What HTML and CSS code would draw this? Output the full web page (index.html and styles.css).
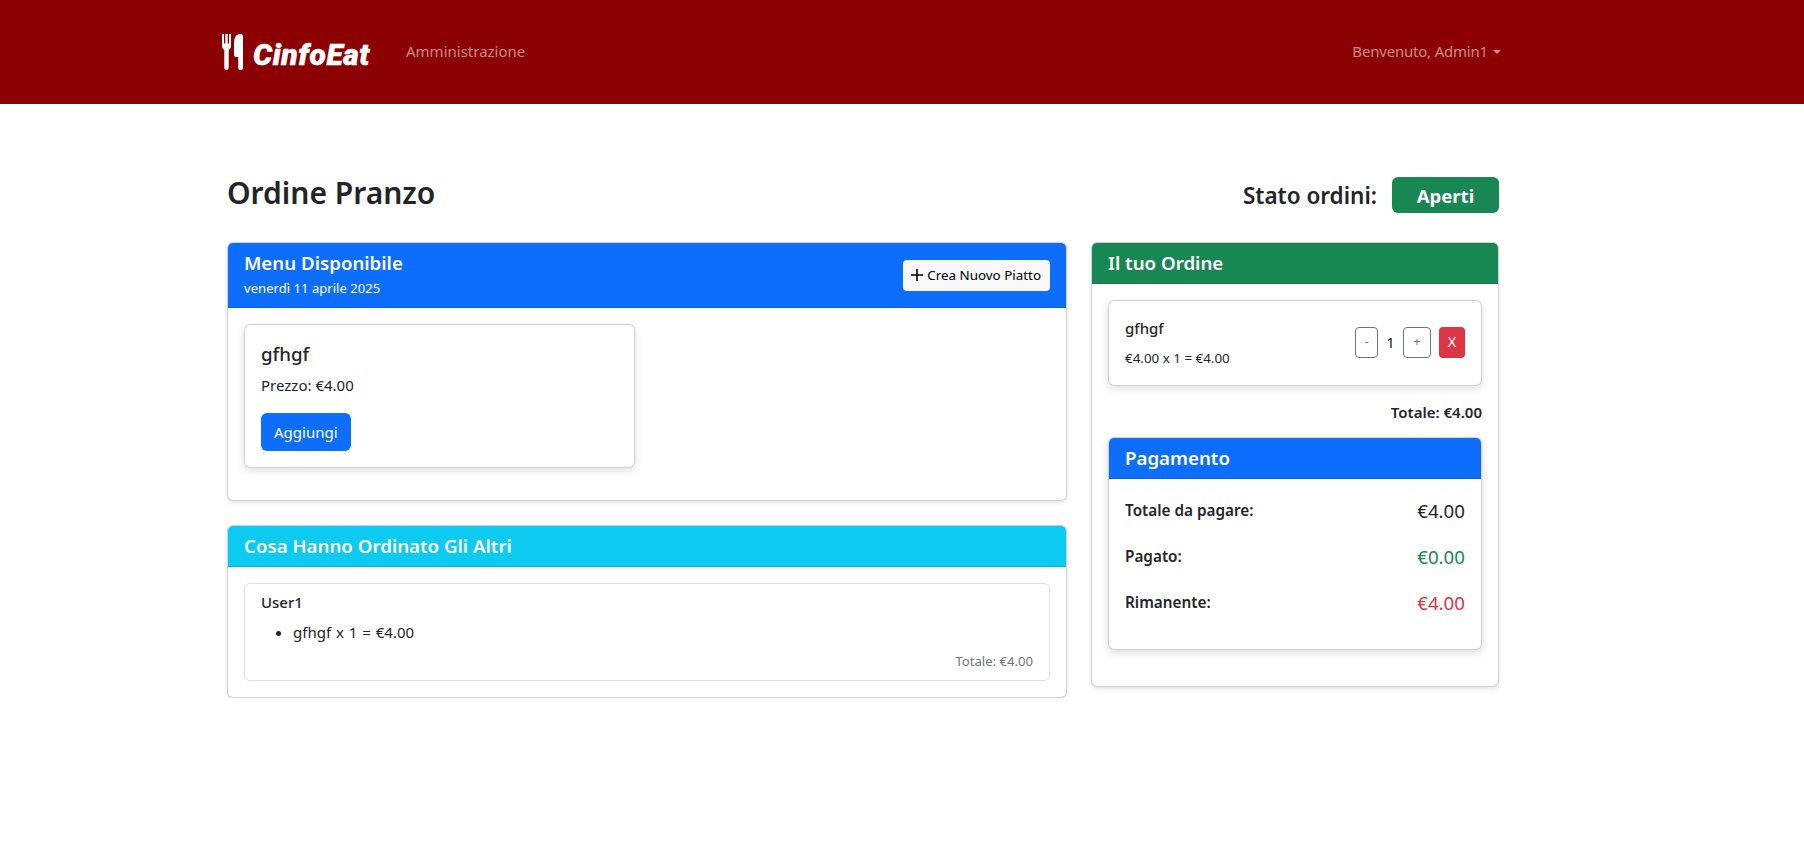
FILE: index.html
```html
<!doctype html>
<html lang="it">
<head>
<meta charset="utf-8">
<meta name="viewport" content="width=device-width, initial-scale=1.0">
<link rel="stylesheet" href="styles.css">
<title>CinfoEat - Ordine Pranzo</title>
</head>
<body>
<nav class="navbar">
	<div class="wrap navbar-inner">
		<a class="brand" href="#">
			<svg class="brand-icon" width="21" height="36" viewBox="0 0 21 36">
				<path d="M0 0h2v9.500h1.300V0h2.400v9.500H7V0h2v12c0 2-1 3.300-2.300 3.900V33.800a2.200 2.200 0 0 1-4.400 0V15.900C1 15.300 0 14 0 12z"/>
				<path d="M12 9c0-5 2-9 6-9h.8C20 0 21 1 21 2.200v31.600a2.400 2.400 0 0 1-4.800 0V23h-2.200c-1.200 0-2-.8-2-2z"/>
			</svg>
			<span class="brand-name">CinfoEat</span>
		</a>
		<a class="nav-link" href="#">Amministrazione</a>
		<a class="nav-link nav-user" href="#">Benvenuto, Admin1<i class="caret"></i></a>
	</div>
</nav>

<main class="wrap">
	<div class="page-head">
		<h1>Ordine Pranzo</h1>
		<div class="status">
			<h2>Stato ordini:</h2>
			<span class="status-badge">Aperti</span>
		</div>
	</div>

	<div class="columns">
		<div class="col-left">
			<section class="card">
				<header class="card-head head-blue head-menu">
					<div>
						<h3>Menu Disponibile</h3>
						<small>venerdì 11 aprile 2025</small>
					</div>
					<button class="btn-light">
						<svg width="12" height="12" viewBox="0 0 12 12"><path d="M5.200 0h1.600v5.200H12v1.600H6.800V12H5.200V6.800H0V5.200h5.200z"/></svg>
						Crea Nuovo Piatto
					</button>
				</header>
				<div class="card-body menu-body">
					<div class="card dish">
						<h4>gfhgf</h4>
						<p>Prezzo: €4.00</p>
						<button class="btn-primary">Aggiungi</button>
					</div>
				</div>
			</section>

			<section class="card others">
				<header class="card-head head-cyan"><h3>Cosa Hanno Ordinato Gli Altri</h3></header>
				<div class="card-body">
					<div class="other-user">
						<h5>User1</h5>
						<ul>
							<li>gfhgf x 1 = €4.00</li>
						</ul>
						<div class="other-total">Totale: €4.00</div>
					</div>
				</div>
			</section>
		</div>

		<div class="col-right">
			<section class="card">
				<header class="card-head head-green"><h3>Il tuo Ordine</h3></header>
				<div class="card-body order-body">
					<div class="card order-item">
						<div>
							<h5>gfhgf</h5>
							<small>€4.00 x 1 = €4.00</small>
						</div>
						<div class="qty">
							<button class="btn-qty">-</button>
							<span>1</span>
							<button class="btn-qty btn-plus">+</button>
							<button class="btn-remove">X</button>
						</div>
					</div>
					<div class="order-total">Totale: €4.00</div>
					<section class="card pay">
						<header class="card-head head-blue"><h3>Pagamento</h3></header>
						<div class="card-body pay-body">
							<div class="pay-row"><b>Totale da pagare:</b><span>€4.00</span></div>
							<div class="pay-row"><b>Pagato:</b><span class="green">€0.00</span></div>
							<div class="pay-row"><b>Rimanente:</b><span class="red">€4.00</span></div>
						</div>
					</section>
				</div>
			</section>
		</div>
	</div>
</main>
</body>
</html>
```

FILE: styles.css
```css
* { box-sizing: border-box; margin: 0; padding: 0; }
body {
	font: 15px/1.5 "Noto Sans", "Open Sans", sans-serif;
	color: #212529;
	background: #fff;
}
h1, h2, h3, h4, h5 { font-weight: 600; line-height: 1.2; }
button { font: inherit; cursor: pointer; }
a { text-decoration: none; }

.wrap { width: 1296px; margin-left: 215px; padding: 0 12px; }

/* navbar */
.navbar { height: 104px; background: #8b0000; }
.navbar-inner { height: 100%; display: flex; align-items: center; }
.brand { display: flex; align-items: center; width: 184px; margin-left: -5px; color: #fff; }
.brand-icon { fill: #fff; flex: none; margin-right: 10px; }
.brand-name {
	font: italic 900 30px/1 Roboto, sans-serif;
	letter-spacing: 0.6px;
	margin-top: 5px;
	-webkit-text-stroke: 0.5px #fff;
}
.nav-link { color: rgba(255,255,255,.55); margin-top: -2px; }
.nav-user { margin-left: auto; margin-right: -2px; letter-spacing: -0.2px; }
.caret {
	display: inline-block;
	margin-left: 5px;
	vertical-align: 3px;
	border-top: 4.5px solid;
	border-left: 4.5px solid transparent;
	border-right: 4.5px solid transparent;
}

/* page title */
.page-head {
	display: flex;
	align-items: center;
	justify-content: space-between;
	margin-top: 73px;
	height: 36px;
}
h1 { font-size: 30px; margin-top: -5px; }
.status { display: flex; align-items: center; gap: 15px; }
h2 { font-size: 22.500px; }
.status-badge {
	width: 107px;
	height: 36px;
	border-radius: 6px;
	background: #198754;
	color: #fff;
	font-size: 18.500px;
	font-weight: 700;
	line-height: 37px;
	text-align: center;
}

.columns { display: flex; gap: 24px; margin-top: 29px; align-items: flex-start; }
.col-left { width: 840px; }
.col-right { width: 408px; }

/* cards */
.card {
	background: #fff;
	border: 1px solid rgba(0,0,0,.18);
	border-radius: 6px;
	box-shadow: 0 2px 5px rgba(0,0,0,.1);
	overflow: hidden;
}
.card-head {
	height: 41px;
	padding: 0 16px;
	color: #fff;
	display: flex;
	align-items: center;
	border-bottom: 1px solid rgba(0,0,0,.125);
}
.card-head h3 { font-size: 18.700px; }
.head-blue { background: #0d6efd; }
.head-cyan { background: #0dcaf0; }
.head-green { background: #198754; }
.head-menu { height: 65px; justify-content: space-between; }
.head-menu small { display: block; font-size: 13.100px; line-height: 19px; margin-top: 4px; }
.card-body { padding: 16px; }
.btn-light {
	display: flex;
	align-items: center;
	gap: 4px;
	height: 31px;
	padding: 0 9px 0 8px;
	border: 0;
	border-radius: 4px;
	background: #f8f9fa;
	color: #000;
	font-size: 13.400px;
}

.menu-body { padding-bottom: 32px; }
.dish { width: 391px; padding: 18px 16px 0; height: 144px; box-shadow: 0 3px 8px rgba(0,0,0,.12); }
.dish h4 { font-size: 18.700px; font-weight: 500; margin-bottom: 9px; }
.dish p { margin-bottom: 16px; }
.btn-primary {
	display: block;
	height: 38px;
	padding: 0 13px;
	border: 0;
	border-radius: 6px;
	background: #0d6efd;
	color: #fff;
}

.others { margin-top: 24px; }
.other-user {
	height: 98px;
	padding: 8px 16px;
	border: 1px solid #dfe2e6;
	border-radius: 6px;
}
.other-user h5 { font-size: 15px; font-weight: 500; line-height: 20px; }
.other-user ul { margin: 8.500px 0 0 32px; word-spacing: 1px; }
.other-total { margin-top: 9px; text-align: right; font-size: 13.100px; color: #6c757d; }

/* order column */
.order-body { padding-bottom: 36px; }
.order-item {
	height: 86px;
	padding: 0 16px;
	display: flex;
	align-items: center;
	justify-content: space-between;
	box-shadow: 0 3px 8px rgba(0,0,0,.12);
}
.order-item h5 { font-size: 15px; font-weight: 500; line-height: 20px; margin-bottom: 11px; }
.order-item small { display: block; font-size: 13.400px; line-height: 19px; }
.qty { display: flex; align-items: center; margin-top: -2px; }
.qty span { width: 25px; text-align: center; }
.btn-qty {
	width: 23px;
	height: 31px;
	border: 1px solid #6c757d;
	border-radius: 4px;
	background: #fff;
	color: #6c757d;
	font-size: 13px;
}
.btn-plus { width: 28px; margin-right: 8px; }
.btn-remove {
	width: 26px;
	height: 31px;
	border: 0;
	border-radius: 4px;
	background: #dc3545;
	color: #fff;
	font-size: 14.500px;
}
.order-total { margin: 16px 0 14.500px; font-weight: 600; font-size: 15px; line-height: 20px; text-align: right; }
.pay { box-shadow: 0 3px 8px rgba(0,0,0,.14); }
.pay .card-head h3 { margin-top: 2px; }
.pay-body { padding: 18px 16px 30px; }
.pay-row { display: flex; justify-content: space-between; align-items: center; height: 30px; margin-bottom: 16px; }
.pay-row:last-child { margin-bottom: 0; }
.pay-row b { font-size: 15.300px; font-weight: 600; margin-top: -3px; }
.pay-row span { font-size: 18.700px; }
.green { color: #198754; }
.red { color: #dc3545; }
```
